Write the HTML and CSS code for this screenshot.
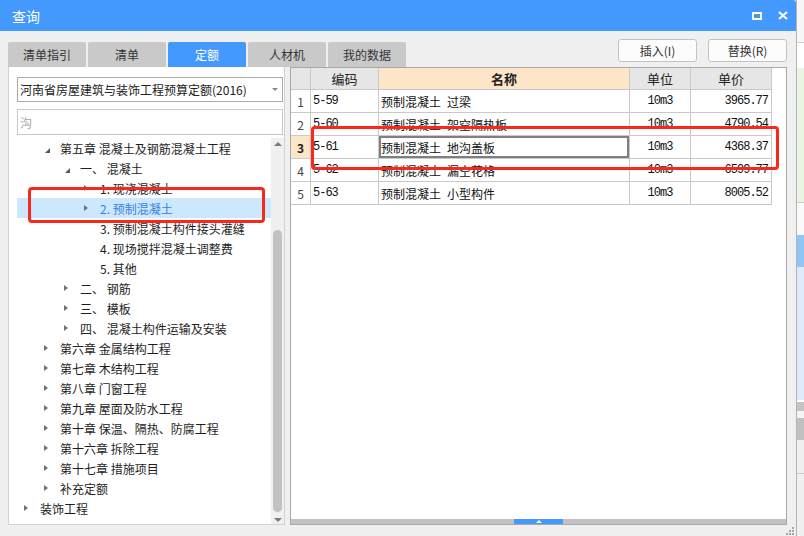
FILE: index.html
```html
<!DOCTYPE html>
<html lang="zh">
<head>
<meta charset="utf-8">
<title>查询</title>
<link rel="stylesheet" href="styles.css">
</head>
<body>
<div class="screen">
  <div class="dialog">
    <div class="titlebar">
      <span class="title">查询</span>
      <div class="winbtns">
        <svg width="10" height="8" viewBox="0 0 10 8"><rect x="1" y="1" width="8" height="6" fill="none" stroke="#fff" stroke-width="2"/></svg>
        <svg width="10" height="9" viewBox="0 0 10 9"><path d="M1 1 L9 8 M9 1 L1 8" stroke="#fff" stroke-width="2" fill="none"/></svg>
      </div>
    </div>
    <div class="dlg-body">
      <div class="toprow">
        <div class="tabs">
          <div class="tab">清单指引</div>
          <div class="tab">清单</div>
          <div class="tab active">定额</div>
          <div class="tab">人材机</div>
          <div class="tab">我的数据</div>
        </div>
        <div class="actions">
          <div class="btn">插入(I)</div>
          <div class="btn">替换(R)</div>
        </div>
      </div>
      <div class="main">
        <div class="left">
          <div class="select"><span>河南省房屋建筑与装饰工程预算定额(2016)</span><i class="dd"></i></div>
          <div class="search">沟</div>
          <div class="treewrap">
            <div class="tree">
              <div class="row l1"><span class="tog exp"></span>第五章 混凝土及钢筋混凝土工程</div>
              <div class="row l2"><span class="tog exp"></span>一、 混凝土</div>
              <div class="row l3"><span class="tog col"></span>1. 现浇混凝土</div>
              <div class="row l3 sel"><span class="tog col"></span>2. 预制混凝土</div>
              <div class="row l3"><span class="tog"></span>3. 预制混凝土构件接头灌缝</div>
              <div class="row l3"><span class="tog"></span>4. 现场搅拌混凝土调整费</div>
              <div class="row l3"><span class="tog"></span>5. 其他</div>
              <div class="row l2"><span class="tog col"></span>二、 钢筋</div>
              <div class="row l2"><span class="tog col"></span>三、 模板</div>
              <div class="row l2"><span class="tog col"></span>四、 混凝土构件运输及安装</div>
              <div class="row l1"><span class="tog col"></span>第六章 金属结构工程</div>
              <div class="row l1"><span class="tog col"></span>第七章 木结构工程</div>
              <div class="row l1"><span class="tog col"></span>第八章 门窗工程</div>
              <div class="row l1"><span class="tog col"></span>第九章 屋面及防水工程</div>
              <div class="row l1"><span class="tog col"></span>第十章 保温、隔热、防腐工程</div>
              <div class="row l1"><span class="tog col"></span>第十六章 拆除工程</div>
              <div class="row l1"><span class="tog col"></span>第十七章 措施项目</div>
              <div class="row l1"><span class="tog col"></span>补充定额</div>
              <div class="row l0"><span class="tog col"></span>装饰工程</div>
            </div>
            <div class="vscroll">
              <div class="arr"><i class="up"></i></div>
              <div class="thumb"></div>
              <div class="arr arr-dn"><i class="dn"></i></div>
            </div>
          </div>
          <div class="mark mark-tree"></div>
        </div>
        <div class="right">
          <div class="grid">
            <div class="gr head">
              <div class="c"></div>
              <div class="c ctr">编码</div>
              <div class="c ctr hl">名称</div>
              <div class="c ctr">单位</div>
              <div class="c ctr">单价</div>
            </div>
            <div class="gr">
              <div class="c num">1</div>
              <div class="c mono">5-59</div>
              <div class="c name">预制混凝土&ensp;过梁</div>
              <div class="c mono ctr">10m3</div>
              <div class="c mono rt">3965.77</div>
            </div>
            <div class="gr">
              <div class="c num">2</div>
              <div class="c mono">5-60</div>
              <div class="c name">预制混凝土&ensp;架空隔热板</div>
              <div class="c mono ctr">10m3</div>
              <div class="c mono rt">4790.54</div>
            </div>
            <div class="gr">
              <div class="c num cur">3</div>
              <div class="c mono">5-61</div>
              <div class="c name focus">预制混凝土&ensp;地沟盖板</div>
              <div class="c mono ctr">10m3</div>
              <div class="c mono rt">4368.37</div>
            </div>
            <div class="gr">
              <div class="c num">4</div>
              <div class="c mono">5-62</div>
              <div class="c name">预制混凝土&ensp;漏空花格</div>
              <div class="c mono ctr">10m3</div>
              <div class="c mono rt">6599.77</div>
            </div>
            <div class="gr">
              <div class="c num">5</div>
              <div class="c mono">5-63</div>
              <div class="c name">预制混凝土&ensp;小型构件</div>
              <div class="c mono ctr">10m3</div>
              <div class="c mono rt">8005.52</div>
            </div>
          </div>
          <div class="hbar"><div class="hbar-btn"><i></i></div></div>
          <div class="mark mark-grid"></div>
        </div>
      </div>
      <svg class="grip" width="10" height="9" viewBox="0 0 10 9">
        <rect x="7" y="0" width="2" height="2" fill="#a6a6a6"/>
        <rect x="4" y="3" width="2" height="2" fill="#a6a6a6"/>
        <rect x="7" y="3" width="2" height="2" fill="#a6a6a6"/>
        <rect x="1" y="6" width="2" height="2" fill="#a6a6a6"/>
        <rect x="4" y="6" width="2" height="2" fill="#a6a6a6"/>
        <rect x="7" y="6" width="2" height="2" fill="#a6a6a6"/>
      </svg>
    </div>
  </div>
  <div class="behind">
    <div class="b1"></div>
    <div class="b2"></div>
    <div class="b3"></div>
    <div class="b4"></div>
    <div class="b5"></div>
    <div class="b6"></div>
    <div class="b7"></div>
    <div class="b8"></div>
    <div class="b9"></div>
    <div class="b10"></div>
    <div class="b11"></div>
    <div class="b12"></div>
    <div class="b13"></div>
  </div>
</div>
</body>
</html>
```

FILE: styles.css
```css
* { box-sizing: border-box; }
html, body { margin: 0; padding: 0; }
body {
  width: 804px;
  height: 536px;
  overflow: hidden;
  font-family: "Noto Sans CJK SC", "Microsoft YaHei", sans-serif;
  font-size: 12px;
  color: #222;
  background: #f0f0f0;
}
.screen { display: flex; width: 804px; height: 536px; }

.dialog {
  width: 797px;
  height: 536px;
  flex: none;
  border-right: 1px solid #b4b4b4;
  display: flex;
  flex-direction: column;
  background: #f0f0f0;
}
.titlebar {
  height: 31px;
  flex: none;
  background: #4499ff;
  color: #fff;
  display: flex;
  align-items: center;
  justify-content: space-between;
  padding: 0 8px 0 12px;
  border-top-right-radius: 3px;
}
.title { font-size: 14px; line-height: 1; margin-top: 1px; }
.winbtns { display: flex; gap: 16px; align-items: center; }
.winbtns svg { display: block; }

.dlg-body {
  flex: 1;
  position: relative;
  padding: 0 9px 0 8px;
  display: flex;
  flex-direction: column;
}
.toprow {
  height: 36px;
  flex: none;
  display: flex;
  justify-content: space-between;
  align-items: flex-start;
}
.tabs { display: flex; gap: 2px; margin-top: 11px; }
.tab {
  width: 78px;
  height: 25px;
  background: #c9c9c9;
  color: #333;
  display: flex;
  align-items: center;
  justify-content: center;
  border-radius: 2px 2px 0 0;
}
.tab.active { background: #4499ff; color: #fff; }
.actions { display: flex; gap: 11px; margin-top: 8px; }
.btn {
  width: 79px;
  height: 23px;
  border: 1px solid #c3c3c3;
  border-radius: 3px;
  background: #fcfcfc;
  color: #333;
  display: flex;
  align-items: center;
  justify-content: center;
}

.main { height: 458px; flex: none; display: flex; gap: 5px; }

.left {
  width: 277px;
  flex: none;
  background: #fff;
  border: 1px solid #d2d2d2;
  border-top: none;
  padding: 10px 0 0 8px;
  display: flex;
  flex-direction: column;
  position: relative;
}
.select {
  height: 25px;
  flex: none;
  margin-right: 1px;
  border: 1px solid #aaaaaa;
  display: flex;
  align-items: center;
  justify-content: space-between;
  padding: 0 4px 0 2px;
  white-space: nowrap;
}
.dd {
  width: 0; height: 0;
  border-top: 3px solid #888;
  border-left: 3px solid transparent;
  border-right: 3px solid transparent;
}
.search {
  height: 26px;
  flex: none;
  margin-top: 7px;
  margin-right: 1px;
  border: 1px solid #c8c8c8;
  padding-left: 2px;
  color: #a5a5a5;
  display: flex;
  align-items: center;
}
.treewrap { flex: 1; margin-top: 3px; display: flex; min-height: 0; }
.tree { flex: 1; }
.row {
  height: 20px;
  display: flex;
  align-items: center;
  white-space: nowrap;
  color: #1e1e1e;
}
.row.l0 { padding-left: 0; }
.row.l1 { padding-left: 20px; }
.row.l2 { padding-left: 40px; }
.row.l3 { padding-left: 60px; }
.row.sel { background: #cce8ff; color: #3a82e2; }
.tog { width: 23px; height: 20px; flex: none; position: relative; }
.tog.exp::before {
  content: "";
  position: absolute;
  left: 8px; top: 10px;
  width: 0; height: 0;
  border-bottom: 5px solid #595959;
  border-left: 5px solid transparent;
}
.tog.col::before {
  content: "";
  position: absolute;
  left: 7px; top: 7px;
  width: 0; height: 0;
  border-left: 4px solid #707070;
  border-top: 3.5px solid transparent;
  border-bottom: 3.5px solid transparent;
}

.vscroll {
  width: 13px;
  flex: none;
  background: #f0f0f0;
  display: flex;
  flex-direction: column;
  align-items: center;
}
.arr { height: 12px; width: 13px; display: flex; justify-content: center; padding-top: 4px; flex: none; }
.arr-dn { margin-top: auto; padding-top: 6px; }
.up {
  width: 0; height: 0;
  border-bottom: 4px solid #7a7a7a;
  border-left: 4px solid transparent;
  border-right: 4px solid transparent;
}
.dn {
  width: 0; height: 0;
  border-top: 4px solid #7a7a7a;
  border-left: 4px solid transparent;
  border-right: 4px solid transparent;
}
.thumb {
  width: 9px;
  height: 282px;
  margin-top: 80px;
  background: #c2c2c2;
  border-radius: 5px;
  flex: none;
}

.right {
  flex: 1;
  background: #fff;
  border: 1px solid #a8a8a8;
  display: flex;
  flex-direction: column;
  position: relative;
}
.grid { width: 481px; }
.gr {
  display: grid;
  grid-template-columns: 20px 68px 251px 61px 81px;
  height: 23px;
}
.gr.head { height: 22px; }
.c {
  border-right: 1px solid #c9c9c9;
  border-bottom: 1px solid #c9c9c9;
  display: flex;
  align-items: center;
  padding: 0 2px;
  overflow: hidden;
  white-space: nowrap;
}
.head .c { background: #e6e6e6; color: #222; font-size: 13px; }
.head .c.hl { background: #fde5c7; font-weight: bold; }
.ctr { justify-content: center; }
.rt { justify-content: flex-end; padding-right: 3px; }
.num { justify-content: center; color: #444; }
.num.cur { background: #fde5c7; font-weight: bold; color: #222; }
.mono {
  font-family: "Liberation Mono", "DejaVu Sans Mono", monospace;
  font-size: 12px;
  letter-spacing: -1px;
  color: #111;
}
.name { color: #111; }
.name.focus { box-shadow: inset 0 0 0 2px #7f7f7f; }

.hbar {
  margin-top: auto;
  height: 5px;
  background: #c2c2c2;
  flex: none;
}
.hbar-btn {
  margin-left: 223px;
  width: 49px;
  height: 5px;
  background: #4499ff;
  display: flex;
  justify-content: center;
  padding-top: 1px;
}
.hbar-btn i {
  width: 0; height: 0;
  border-bottom: 3px solid #fff;
  border-left: 3px solid transparent;
  border-right: 3px solid transparent;
}

.mark {
  position: absolute;
  border: 3px solid #f8281b;
  border-radius: 4px;
  pointer-events: none;
}
.mark-tree { left: 19px; top: 120px; width: 237px; height: 36px; }
.mark-grid { left: 20px; top: 58px; width: 468px; height: 44px; }

.grip { position: absolute; right: 1px; bottom: 0; display: block; }

.behind { width: 7px; flex: none; display: flex; flex-direction: column; }
.b1 { height: 42px; background: #f7f7f7; }
.b2 { height: 1px; background: #cfcfcf; }
.b3 { height: 25px; background: #ffffff; }
.b4 { height: 134px; background: #eaf6e2; }
.b5 { height: 1px; background: #cccccc; }
.b6 { height: 32px; background: #fafafa; }
.b7 { height: 32px; background: #8fc6f5; }
.b8 { height: 133px; background: #dfeafb; }
.b9 { height: 2px; background: #ffffff; }
.b10 { height: 9px; background: #c4c4c4; }
.b11 { height: 7px; background: #f4f4f4; }
.b12 { height: 22px; background: #c0c0c0; }
.b13 { flex: 1; background: #f0f0f0; border-top: 33px solid #f0f0f0; box-shadow: inset 0 1px 0 #c8c8c8; }
```
